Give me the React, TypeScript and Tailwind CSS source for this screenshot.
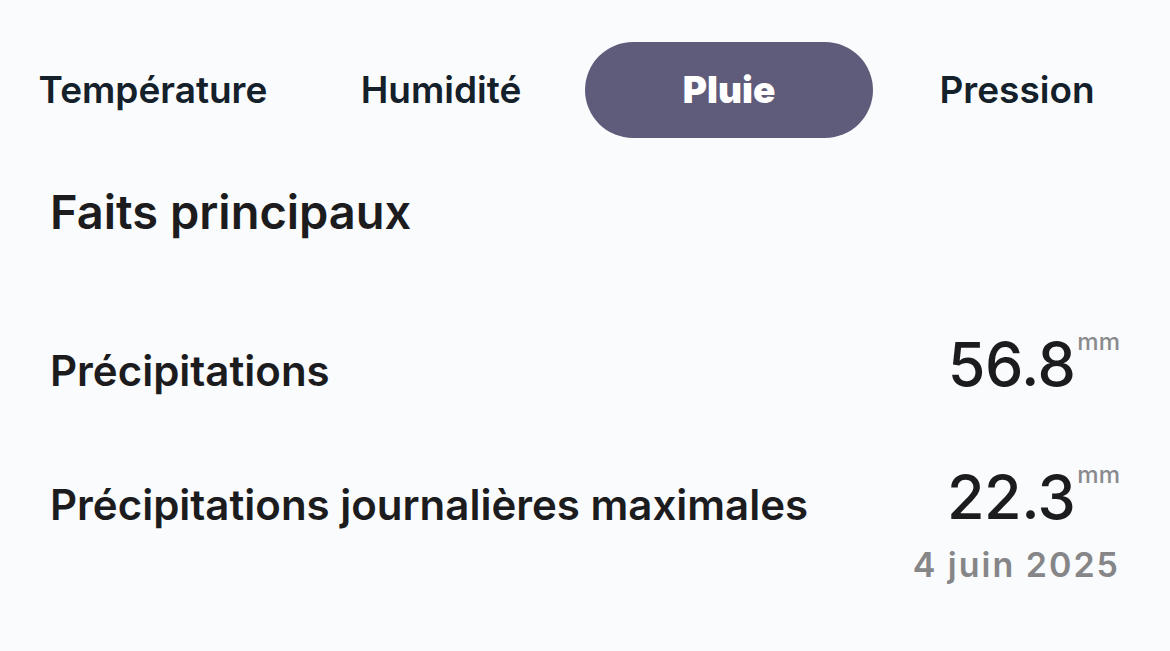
import React from 'react';

const tabs = ['Température', 'Humidité', 'Pluie', 'Pression'];

const Value: React.FC<{ value: string; unit: string }> = ({ value, unit }) => (
  <div className="flex items-start">
    <span className="text-[61px] font-medium leading-none tracking-[-0.5px] text-[#1c1c1e]">{value}</span>
    <span className="ml-[2px] -mt-[4px] text-[24px] font-medium leading-none text-[#8a8a8e]">{unit}</span>
  </div>
);

const App: React.FC = () => {
  const active = 'Pluie';

  return (
    <div className="min-h-[651px] w-full bg-[#f9fbfd] font-['Inter',sans-serif]">
      {/* Tabs */}
      <div className="grid grid-cols-4 px-[9px] pt-[42px]">
        {tabs.map((t) => (
          <div
            key={t}
            className={
              t === active
                ? 'flex h-[96px] items-center justify-center rounded-full bg-[#5f5b7a] text-[37px] font-black text-white'
                : 'flex h-[96px] items-center justify-center text-[37px] font-semibold text-[#14202a]'
            }
          >
            {t}
          </div>
        ))}
      </div>

      {/* Faits principaux */}
      <div className="px-[50px]">
        <h2 className="mt-[50px] text-[47px] font-semibold leading-none text-[#1c1c1e]">Faits principaux</h2>

        <div className="mt-[99px] flex items-baseline justify-between">
          <span className="text-[42px] font-semibold leading-none text-[#1c1c1e]">Précipitations</span>
          <Value value="56.8" unit="mm" />
        </div>

        <div className="mt-[72px] flex items-start justify-between">
          <div className="flex h-[61px] items-baseline">
            <span className="mt-[17px] text-[42px] font-semibold leading-none text-[#1c1c1e]">
              Précipitations journalières maximales
            </span>
          </div>
          <div className="flex flex-col items-end">
            <Value value="22.3" unit="mm" />
            <span className="mt-[20px] text-[34px] font-semibold leading-none tracking-[2px] text-[#868688]">4 juin 2025</span>
          </div>
        </div>
      </div>
    </div>
  );
};

export default App;
